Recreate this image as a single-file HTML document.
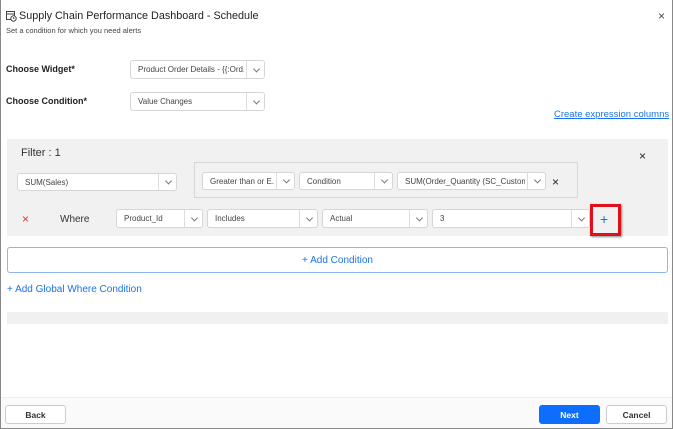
<!DOCTYPE html><html><head><style>
*{box-sizing:border-box;margin:0;padding:0}
body{width:673px;height:429px;background:#fff;font-family:"Liberation Sans",sans-serif;position:relative;overflow:hidden;color:#222}
.a{position:absolute;white-space:nowrap}
.dd{position:absolute;background:#fff;border:1px solid #d6d6d6;border-radius:3px;font-size:8px;color:#444;padding-left:7px;padding-right:20px;display:flex;align-items:center;white-space:nowrap}
.dd span{overflow:hidden;display:block}
.dd:after{content:"";position:absolute;right:0;top:0;bottom:0;width:17px;border-left:1px solid #ddd}
.dd i{position:absolute;right:5px;top:50%;width:5px;height:5px;border-right:1px solid #777;border-bottom:1px solid #777;transform:translateY(-70%) rotate(45deg)}
.btn{position:absolute;border:1px solid #ccc;border-radius:3px;background:#fff;font-size:8.5px;font-weight:bold;display:flex;align-items:center;justify-content:center;color:#333}
</style></head><body>
<div class="a" style="left:0;top:0;width:673px;height:429px;border:1px solid #888;border-top:none"></div>
<svg class="a" style="left:6px;top:10px" width="11" height="12" viewBox="0 0 11 12"><rect x="0.5" y="1.5" width="8" height="8" fill="none" stroke="#444"/><line x1="0.5" y1="4" x2="8.5" y2="4" stroke="#444"/><circle cx="7.5" cy="8.5" r="2.7" fill="#fff" stroke="#444"/><path d="M7.5 7v1.6h1" stroke="#444" fill="none" stroke-width=".8"/></svg>
<div class="a" style="left:19px;top:10px;font-size:10.8px;color:#222">Supply Chain Performance Dashboard - Schedule</div>
<div class="a" style="left:6px;top:26px;font-size:7.5px;color:#444">Set a condition for which you need alerts</div>
<div class="a" style="left:658px;top:9px;font-size:12px;color:#444">×</div>
<div class="a" style="left:6px;top:64px;font-size:9px;font-weight:bold">Choose Widget*</div>
<div class="dd" style="left:130px;top:60px;width:135px;height:19px"><span>Product Order Details - {{:Ord...</span><i></i></div>
<div class="a" style="left:6px;top:96px;font-size:9px;font-weight:bold">Choose Condition*</div>
<div class="dd" style="left:130px;top:92px;width:135px;height:19px"><span>Value Changes</span><i></i></div>
<div class="a" style="left:554px;top:109px;font-size:9.5px;color:#1a73e8;text-decoration:underline">Create expression columns</div>
<div class="a" style="left:7px;top:139px;width:661px;height:97px;background:#f1f1f1"></div>
<div class="a" style="left:21px;top:147px;font-size:11px;color:#333">Filter : 1</div>
<div class="a" style="left:639px;top:149px;font-size:12px;color:#222">×</div>
<div class="dd" style="left:17px;top:173px;width:160px;height:18px"><span>SUM(Sales)</span><i></i></div>
<div class="a" style="left:194px;top:162px;width:384px;height:36px;border:1px solid #d6d6d6"></div>
<div class="dd" style="left:202px;top:172px;width:93px;height:18px"><span>Greater than or E...</span><i></i></div>
<div class="dd" style="left:299px;top:172px;width:94px;height:18px"><span>Condition</span><i></i></div>
<div class="dd" style="left:397px;top:172px;width:149px;height:18px"><span>SUM(Order_Quantity (SC_Custom...</span><i></i></div>
<div class="a" style="left:552px;top:175px;font-size:12px;color:#222">×</div>
<div class="a" style="left:22px;top:212px;font-size:12px;color:#d33">×</div>
<div class="a" style="left:60px;top:214px;font-size:10px;color:#333">Where</div>
<div class="dd" style="left:116px;top:209px;width:87px;height:19px"><span>Product_Id</span><i></i></div>
<div class="dd" style="left:207px;top:209px;width:111px;height:19px"><span>Includes</span><i></i></div>
<div class="dd" style="left:322px;top:209px;width:106px;height:19px"><span>Actual</span><i></i></div>
<div class="dd" style="left:432px;top:209px;width:158px;height:19px"><span>3</span><i></i></div>
<div class="a" style="left:590px;top:204px;width:31px;height:32px;border:3px solid #e0101a;box-shadow:1px 1px 2px #888"></div>
<div class="a" style="left:600px;top:211px;font-size:14px;color:#1a73e8">+</div>
<div class="a" style="left:7px;top:247px;width:661px;height:26px;border:1px solid #8fb6f0;border-radius:3px;font-size:10px;color:#1a73e8;display:flex;align-items:center;justify-content:center">+ Add Condition</div>
<div class="a" style="left:7px;top:284px;font-size:10px;color:#1a73e8">+ Add Global Where Condition</div>
<div class="a" style="left:7px;top:312px;width:661px;height:12px;background:#f0f0f0"></div>
<div class="a" style="left:1px;top:397px;width:671px;height:31px;background:#fafafa;border-top:1px solid #eee"></div>
<div class="btn" style="left:5px;top:405px;width:61px;height:19px">Back</div>
<div class="btn" style="left:539px;top:405px;width:61px;height:19px;background:#0d6efd;border-color:#0d6efd;color:#fff">Next</div>
<div class="btn" style="left:606px;top:405px;width:61px;height:19px">Cancel</div>
</body></html>
